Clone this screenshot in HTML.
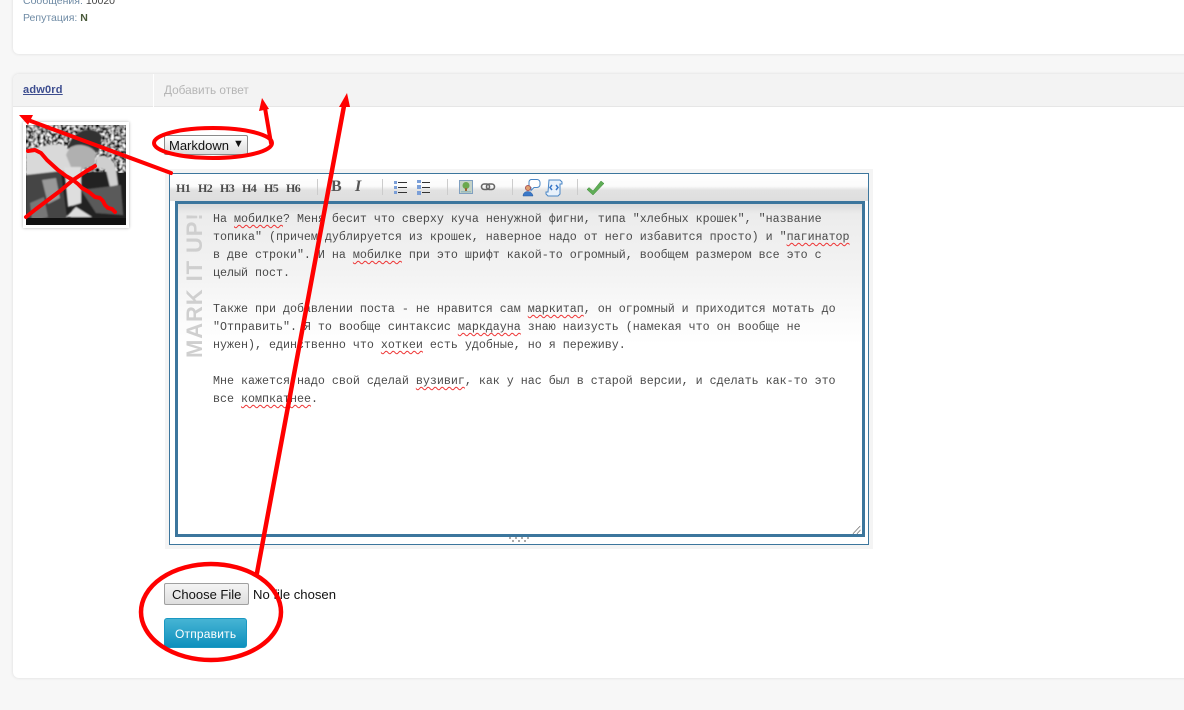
<!DOCTYPE html>
<html><head><meta charset="utf-8">
<style>
html,body{margin:0;padding:0}
body{width:1184px;height:710px;position:relative;overflow:hidden;background:#f7f7f7;font-family:"Liberation Sans",sans-serif}
div,span{position:absolute;box-sizing:border-box}
.panel{background:#fff;border-radius:6px;box-shadow:0 0 3px rgba(0,0,0,.12)}
.h{font-family:"Liberation Serif",serif;font-weight:bold;font-size:12px;color:#4a4a4a;top:181px;letter-spacing:-.6px}
.l{left:213px;font-family:"Liberation Mono",monospace;font-size:11.67px;line-height:18px;color:#4a4a4a;white-space:pre;height:18px}
u{text-decoration:underline wavy #e33 1px;text-underline-offset:2px}
.sep{top:179px;width:1px;height:16px;background:#ccc}
</style></head><body>
<div class="panel" style="left:13px;top:-20px;width:1190px;height:74px"></div>
<span style="left:23px;top:-5px;font-size:10.5px;color:#6f8ba5;white-space:nowrap">Сообщения: <b style="color:#444;font-weight:normal">10020</b></span>
<span style="left:23px;top:12px;font-size:10.5px;color:#6f8ba5;white-space:nowrap">Репутация: <b style="color:#4a5a3a">N</b></span>

<div class="panel" style="left:13px;top:74px;width:1190px;height:604px"></div>
<div style="left:13px;top:74px;width:1171px;height:33px;background:#f3f3f3;border-bottom:1px solid #e6e6e6;border-radius:6px 0 0 0"></div>
<div style="left:153px;top:74px;width:1px;height:33px;background:#fff"></div>
<span style="left:23px;top:84px;font-size:11px;font-weight:bold;color:#3d4d8f;text-decoration:underline;letter-spacing:.2px">adw0rd</span>
<span style="left:164px;top:83px;font-size:11.8px;color:#b5b5b5;white-space:nowrap">Добавить ответ</span>

<!-- avatar -->
<div style="left:23px;top:122px;width:106px;height:106px;background:#fff;box-shadow:0 0 3px rgba(0,0,0,.3)"></div>
<svg style="position:absolute;left:26px;top:125px" width="100" height="100" viewBox="0 0 100 100">
<defs>
<filter id="b"><feGaussianBlur stdDeviation=".8"/></filter>
<filter id="s" x="0" y="0" width="100%" height="100%"><feTurbulence type="fractalNoise" baseFrequency=".34" numOctaves="2" seed="7"/><feColorMatrix values="2.500 2.500 0 0 -2.200 2.500 2.500 0 0 -2.200 2.500 2.500 0 0 -2.200 0 0 0 0 1"/><feGaussianBlur stdDeviation=".5"/></filter>
</defs>
<rect width="100" height="100" fill="#1e1e1e"/>
<rect x="0" y="0" width="100" height="48" filter="url(#s)"/>
<g filter="url(#b)">
<path d="M0 27C15 20 30 18 38 20L50 32 45 45 30 48 0 50Z" fill="#d9d9d9"/>
<path d="M0 50L35 46 42 100H0Z" fill="#444"/>
<path d="M16 55l14-2 4 20-12 6Z" fill="#999"/>
<path d="M4 78l14-6 4 20-16 4Z" fill="#777"/>
<path d="M50 48L92 46 100 100H44Z" fill="#222"/>
<path d="M40 30C45 15 65 15 70 30L68 40 55 45 45 42Z" fill="#b0b0b0"/>
<path d="M42 22C48 2 70 0 76 12L72 28C60 18 50 18 42 24Z" fill="#303030"/>
<path d="M70 32C80 28 88 35 90 45L92 60 84 62 80 45 70 42Z" fill="#cfcfcf"/>
<path d="M38 42L55 42 55 78 42 82Z" fill="#dedede"/>
<path d="M55 65L95 60 97 90 70 88Z" fill="#5a5a5a"/>
<path d="M40 92L50 82 66 92Z" fill="#ddd"/>
</g>
<rect y="93" width="100" height="7" fill="#111"/>
</svg>

<!-- select -->
<div style="left:164px;top:135px;width:84px;height:20px;background:linear-gradient(#fff,#dcdcdc);border:1px solid #8a8a8a;border-radius:2px"></div>
<span style="left:169px;top:138px;font-size:13px;color:#111">Markdown</span>
<span style="left:233px;top:138px;font-size:11px;color:#111">▼</span>

<!-- editor -->
<div style="left:165px;top:169px;width:708px;height:380px;background:#f4f4f4"></div>
<div style="left:169px;top:173px;width:700px;height:372px;background:#fff;border:1px solid #3c769d"></div>
<div style="left:170px;top:174px;width:698px;height:27px;background:linear-gradient(#fff 0,#fbfbfb 45%,#e2e2e2 60%,#dedede 100%)"></div>
<span class="h" style="left:176px">H1</span><span class="h" style="left:198px">H2</span><span class="h" style="left:220px">H3</span><span class="h" style="left:242px">H4</span><span class="h" style="left:264px">H5</span><span class="h" style="left:286px">H6</span>
<div class="sep" style="left:317px"></div>
<span style="left:331px;top:178px;font-family:'Liberation Serif',serif;font-weight:bold;font-size:16px;color:#555">B</span>
<span style="left:355px;top:178px;font-family:'Liberation Serif',serif;font-style:italic;font-weight:bold;font-size:16px;color:#555">I</span>
<div class="sep" style="left:382px"></div>
<svg style="position:absolute;left:392px;top:179px" width="120" height="17" viewBox="0 0 120 17">
<g fill="#7b9fd8"><rect x="2" y="2" width="3" height="3"/><rect x="2" y="7" width="3" height="3"/><rect x="2" y="12" width="3" height="3"/><rect x="25" y="1" width="4" height="3"/><rect x="25" y="6" width="4" height="4"/><rect x="25" y="12" width="4" height="4"/></g>
<g stroke="#333" stroke-width="1"><path d="M6 3.500h9M6 8.500h9M6 13.500h9M30 3.500h8M30 8.500h8M30 13.500h8"/></g>
<rect x="67.500" y="1.500" width="13" height="13" fill="#c5d3c8" stroke="#7f9fc0"/><circle cx="74" cy="6.500" r="3.500" fill="#6aa84f"/><rect x="73" y="9" width="2" height="3" fill="#963"/><rect x="69" y="12" width="10" height="1.500" fill="#9bb"/>
<rect x="89.500" y="5" width="8" height="5.500" rx="2.700" fill="none" stroke="#666" stroke-width="1.600"/><rect x="94.500" y="5" width="8" height="5.500" rx="2.700" fill="none" stroke="#666" stroke-width="1.600"/>
</svg>
<div class="sep" style="left:447px"></div>
<div class="sep" style="left:512px"></div>
<svg style="position:absolute;left:522px;top:178px" width="90" height="19" viewBox="0 0 90 19">
<path d="M9 1.500h6a3 3 0 0 1 3 3v2a3 3 0 0 1-3 3h-3l-3 3v-3a3 3 0 0 1-2-3v-2a3 3 0 0 1 2-3Z" fill="#fff" stroke="#4a86c5"/>
<circle cx="6" cy="10" r="2.500" fill="#e0a070" stroke="#a55"/><path d="M1 18c0-6 9-6 10 0Z" fill="#3a78c8" stroke="#2a5a9a" stroke-width=".5"/>
<path d="M27 2h11l2 2v2h-2v10l-2 2H26l-2-2v-2h2Z" fill="#e8f1fb" stroke="#4a86c5"/><path d="M30 7l-2 2.500 2 2.500M34 7l2 2.500-2 2.500" fill="none" stroke="#3a78c8" stroke-width="1.500"/>
<path d="M67 9.500l4 3.500 8-10 3 2.500-11 11.500-6-5.500Z" fill="#5fad56" stroke="#3f8a3a" stroke-width=".5"/>
</svg>
<div class="sep" style="left:577px"></div>

<div style="left:175px;top:201px;width:690px;height:336px;border:3px solid #3c769d;background:linear-gradient(#dadada 0,#ececec 10px,#f3f3f3 70px,#fff 140px,#fff 100%)"></div>
<span style="left:186px;top:358px;transform-origin:0 0;transform:rotate(-90deg);font-family:'Liberation Sans',sans-serif;font-weight:bold;font-size:22px;letter-spacing:.9px;color:#cfcfcf;white-space:nowrap;line-height:17px">MARK IT UP!</span>

<div class="l" style="top:210px">На <u>мобилке</u>? Меня бесит что сверху куча ненужной фигни, типа "хлебных крошек", "название</div>
<div class="l" style="top:228px">топика" (причем дублируется из крошек, наверное надо от него избавится просто) и "<u>пагинатор</u></div>
<div class="l" style="top:246px">в две строки". И на <u>мобилке</u> при это шрифт какой-то огромный, вообщем размером все это с</div>
<div class="l" style="top:264px">целый пост.</div>
<div class="l" style="top:300px">Также при добавлении поста - не нравится сам <u>маркитап</u>, он огромный и приходится мотать до</div>
<div class="l" style="top:318px">"Отправить". Я то вообще синтаксис <u>маркдауна</u> знаю наизусть (намекая что он вообще не</div>
<div class="l" style="top:336px">нужен), единственно что <u>хоткеи</u> есть удобные, но я переживу.</div>
<div class="l" style="top:372px">Мне кажется надо свой сделай <u>вузивиг</u>, как у нас был в старой версии, и сделать как-то это</div>
<div class="l" style="top:390px">все <u>компкатнее</u>.</div>

<svg style="position:absolute;left:852px;top:525px" width="10" height="9" viewBox="0 0 10 9"><path d="M1 8.500L8.500 1M5 8.500L8.500 5" stroke="#555" stroke-width="1" stroke-dasharray="1 .5"/></svg>
<svg style="position:absolute;left:508px;top:536px" width="22" height="7" viewBox="0 0 22 7"><g fill="#aaa"><rect x="1" y="1" width="2" height="2"/><rect x="7" y="1" width="2" height="2"/><rect x="13" y="1" width="2" height="2"/><rect x="19" y="1" width="2" height="2"/><rect x="4" y="4" width="2" height="2"/><rect x="10" y="4" width="2" height="2"/><rect x="16" y="4" width="2" height="2"/></g></svg>

<!-- file -->
<div style="left:164px;top:583px;width:85px;height:22px;background:linear-gradient(#f4f4f4,#dedede);border:1px solid #a0a0a0;border-radius:2px"></div>
<span style="left:172px;top:587px;font-size:13px;color:#111;white-space:nowrap">Choose File</span>
<span style="left:253px;top:587px;font-size:13.1px;color:#111;white-space:nowrap">No file chosen</span>

<div style="left:164px;top:618px;width:83px;height:30px;border-radius:3px;background:linear-gradient(#46b4d4,#0e90bd);border:1px solid #1a98c2"></div>
<span style="left:175px;top:627px;font-size:12px;color:#fff;letter-spacing:.2px">Отправить</span>

<!-- red annotations -->
<svg style="position:absolute;left:0;top:0" width="1184" height="710" viewBox="0 0 1184 710" fill="none">
<g stroke="#f00" stroke-linecap="round" stroke-linejoin="round">
<path d="M171 173L28 120" stroke-width="4"/>
<path d="M28 151L35 150 41 153 47 160 58 170 66 176 73 180 78 184 82 188 89 192 95 197 100 198 103 201 105 205 108 208 112 209 115 212" stroke-width="4"/>
<path d="M26 217L36 209 48 200 60 191 73 180 85 172 95 166" stroke-width="4"/>
<ellipse cx="213" cy="143" rx="59" ry="15" stroke-width="4"/>
<path d="M271 143L265 108" stroke-width="4"/>
<path d="M257 573L344 106" stroke-width="4.500"/>
<ellipse cx="211" cy="612" rx="70" ry="48" stroke-width="4.500"/>
</g>
<g fill="#f00">
<path d="M19 115L33 115 28 125Z"/>
<path d="M262 98L269 109 259 111Z"/>
<path d="M347 93L350 107 339 107Z"/>
</g>
</svg>
</body></html>
